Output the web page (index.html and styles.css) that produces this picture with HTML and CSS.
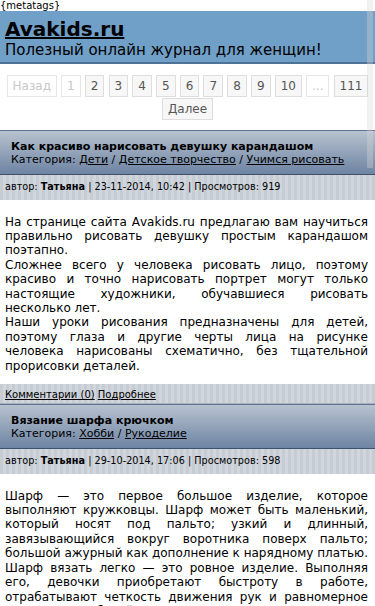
FILE: index.html
```html
<!DOCTYPE html>
<html lang="ru">
<head>
<meta charset="utf-8">
<title>Avakids.ru</title>
<link rel="stylesheet" href="styles.css">
</head>
<body>
<div class="meta">{metatags}</div>
<header class="header">
  <a class="site-title" href="#">Avakids.ru</a>
  <div class="slogan">Полезный онлайн журнал для женщин!</div>
</header>
<nav class="pager">
  <span class="pg off">Назад</span>
  <span class="pg off">1</span>
  <a class="pg" href="#">2</a>
  <a class="pg" href="#">3</a>
  <a class="pg" href="#">4</a>
  <a class="pg" href="#">5</a>
  <a class="pg" href="#">6</a>
  <a class="pg" href="#">7</a>
  <a class="pg" href="#">8</a>
  <a class="pg" href="#">9</a>
  <a class="pg" href="#">10</a>
  <span class="pg off">...</span>
  <a class="pg" href="#">111</a>
  <a class="pg" href="#">Далее</a>
</nav>

<article class="post">
  <div class="post-head">
    <div class="post-title">Как красиво нарисовать девушку карандашом</div>
    <div class="post-cat">Категория: <a href="#">Дети</a> / <a href="#">Детское творчество</a> / <a href="#">Учимся рисовать</a></div>
  </div>
  <div class="stripe author">автор: <b>Татьяна</b> | 23-11-2014, 10:42 | Просмотров: 919</div>
  <div class="post-text">На странице сайта Avakids.ru предлагаю вам научиться правильно рисовать девушку простым карандашом поэтапно.<br>Сложнее всего у человека рисовать лицо, поэтому красиво и точно нарисовать портрет могут только настоящие художники, обучавшиеся рисовать несколько лет.<br>Наши уроки рисования предназначены для детей, поэтому глаза и другие черты лица на рисунке человека нарисованы схематично, без тщательной прорисовки деталей.</div>
  <div class="stripe foot"><a href="#">Комментарии (0)</a> <a href="#">Подробнее</a></div>
</article>

<article class="post">
  <div class="post-head">
    <div class="post-title">Вязание шарфа крючком</div>
    <div class="post-cat">Категория: <a href="#">Хобби</a> / <a href="#">Рукоделие</a></div>
  </div>
  <div class="stripe author">автор: <b>Татьяна</b> | 29-10-2014, 17:06 | Просмотров: 598</div>
  <div class="post-text">Шарф — это первое большое изделие, которое выполняют кружковцы. Шарф может быть маленький, который носят под пальто; узкий и длинный, завязывающийся вокруг воротника поверх пальто; большой ажурный как дополнение к нарядному платью. Шарф вязать легко — это ровное изделие. Выполняя его, девочки приобретают быстроту в работе, отрабатывают четкость движения рук и равномерное натяжение рабочей нитки. Сначала надо посоветовать девочкам связать небольшой образец.</div>
</article>

<div class="side-strip"></div>
</body>
</html>
```
FILE: styles.css
```css
html, body {
  margin: 0;
  padding: 0;
  background: #fff;
}
body {
  font-family: "DejaVu Sans", "Liberation Sans", sans-serif;
  color: #000;
  position: relative;
  overflow: hidden;
}
a { color: #000; }

.meta {
  font-size: 10px;
  line-height: 11px;
}

.header {
  background: #709fc7;
  border-bottom: 2px solid #4e7397;
  padding: 6px 5px 3px;
}
.site-title {
  display: inline-block;
  font-size: 20px;
  font-weight: bold;
  color: #000;
  text-decoration: underline;
}
.slogan {
  font-size: 15px;
}

.pager {
  display: flex;
  flex-wrap: wrap;
  justify-content: center;
  column-gap: 4.1px;
  row-gap: 1px;
  padding: 11px 0 10px;
}
.pg {
  display: block;
  font-size: 12px;
  line-height: 14px;
  padding: 3px 5px;
  border: 1px solid #dedede;
  background: #f7f7f7;
  color: #555;
  text-decoration: none;
}
.pg.off {
  background: #fff;
  color: #c8c8c8;
  border-color: #e6e6e6;
}

.post-head {
  border-top: 1px solid #5d7190;
  border-bottom: 1px solid #3f526c;
  background: linear-gradient(#b7c2cf, #6e84a3);
  padding: 9px 11px 8px;
  font-size: 11px;
}
.post-title {
  font-weight: bold;
}

.stripe {
  background-color: #cbd1d8;
  background-image: repeating-linear-gradient(90deg, #c6ccd4 0, #c6ccd4 3px, #d1d6dc 3px, #d1d6dc 6px);
  font-size: 10px;
  padding: 0 5px;
}
.author {
  font-size: 9.7px;
  line-height: 11.6px;
  padding-top: 6px;
  padding-bottom: 7px;
}
.foot {
  padding-top: 5px;
  padding-bottom: 3px;
  border-bottom: 1px solid #a9b3c0;
}

.post-text {
  font-size: 12px;
  line-height: 14.4px;
  text-align: justify;
  font-kerning: none;
  padding: 15px 7px 11px 5px;
}

.side-strip {
  position: absolute;
  top: 0;
  right: 2px;
  width: 6px;
  height: 168px;
  background: rgba(215, 215, 215, 0.35);
}
```
